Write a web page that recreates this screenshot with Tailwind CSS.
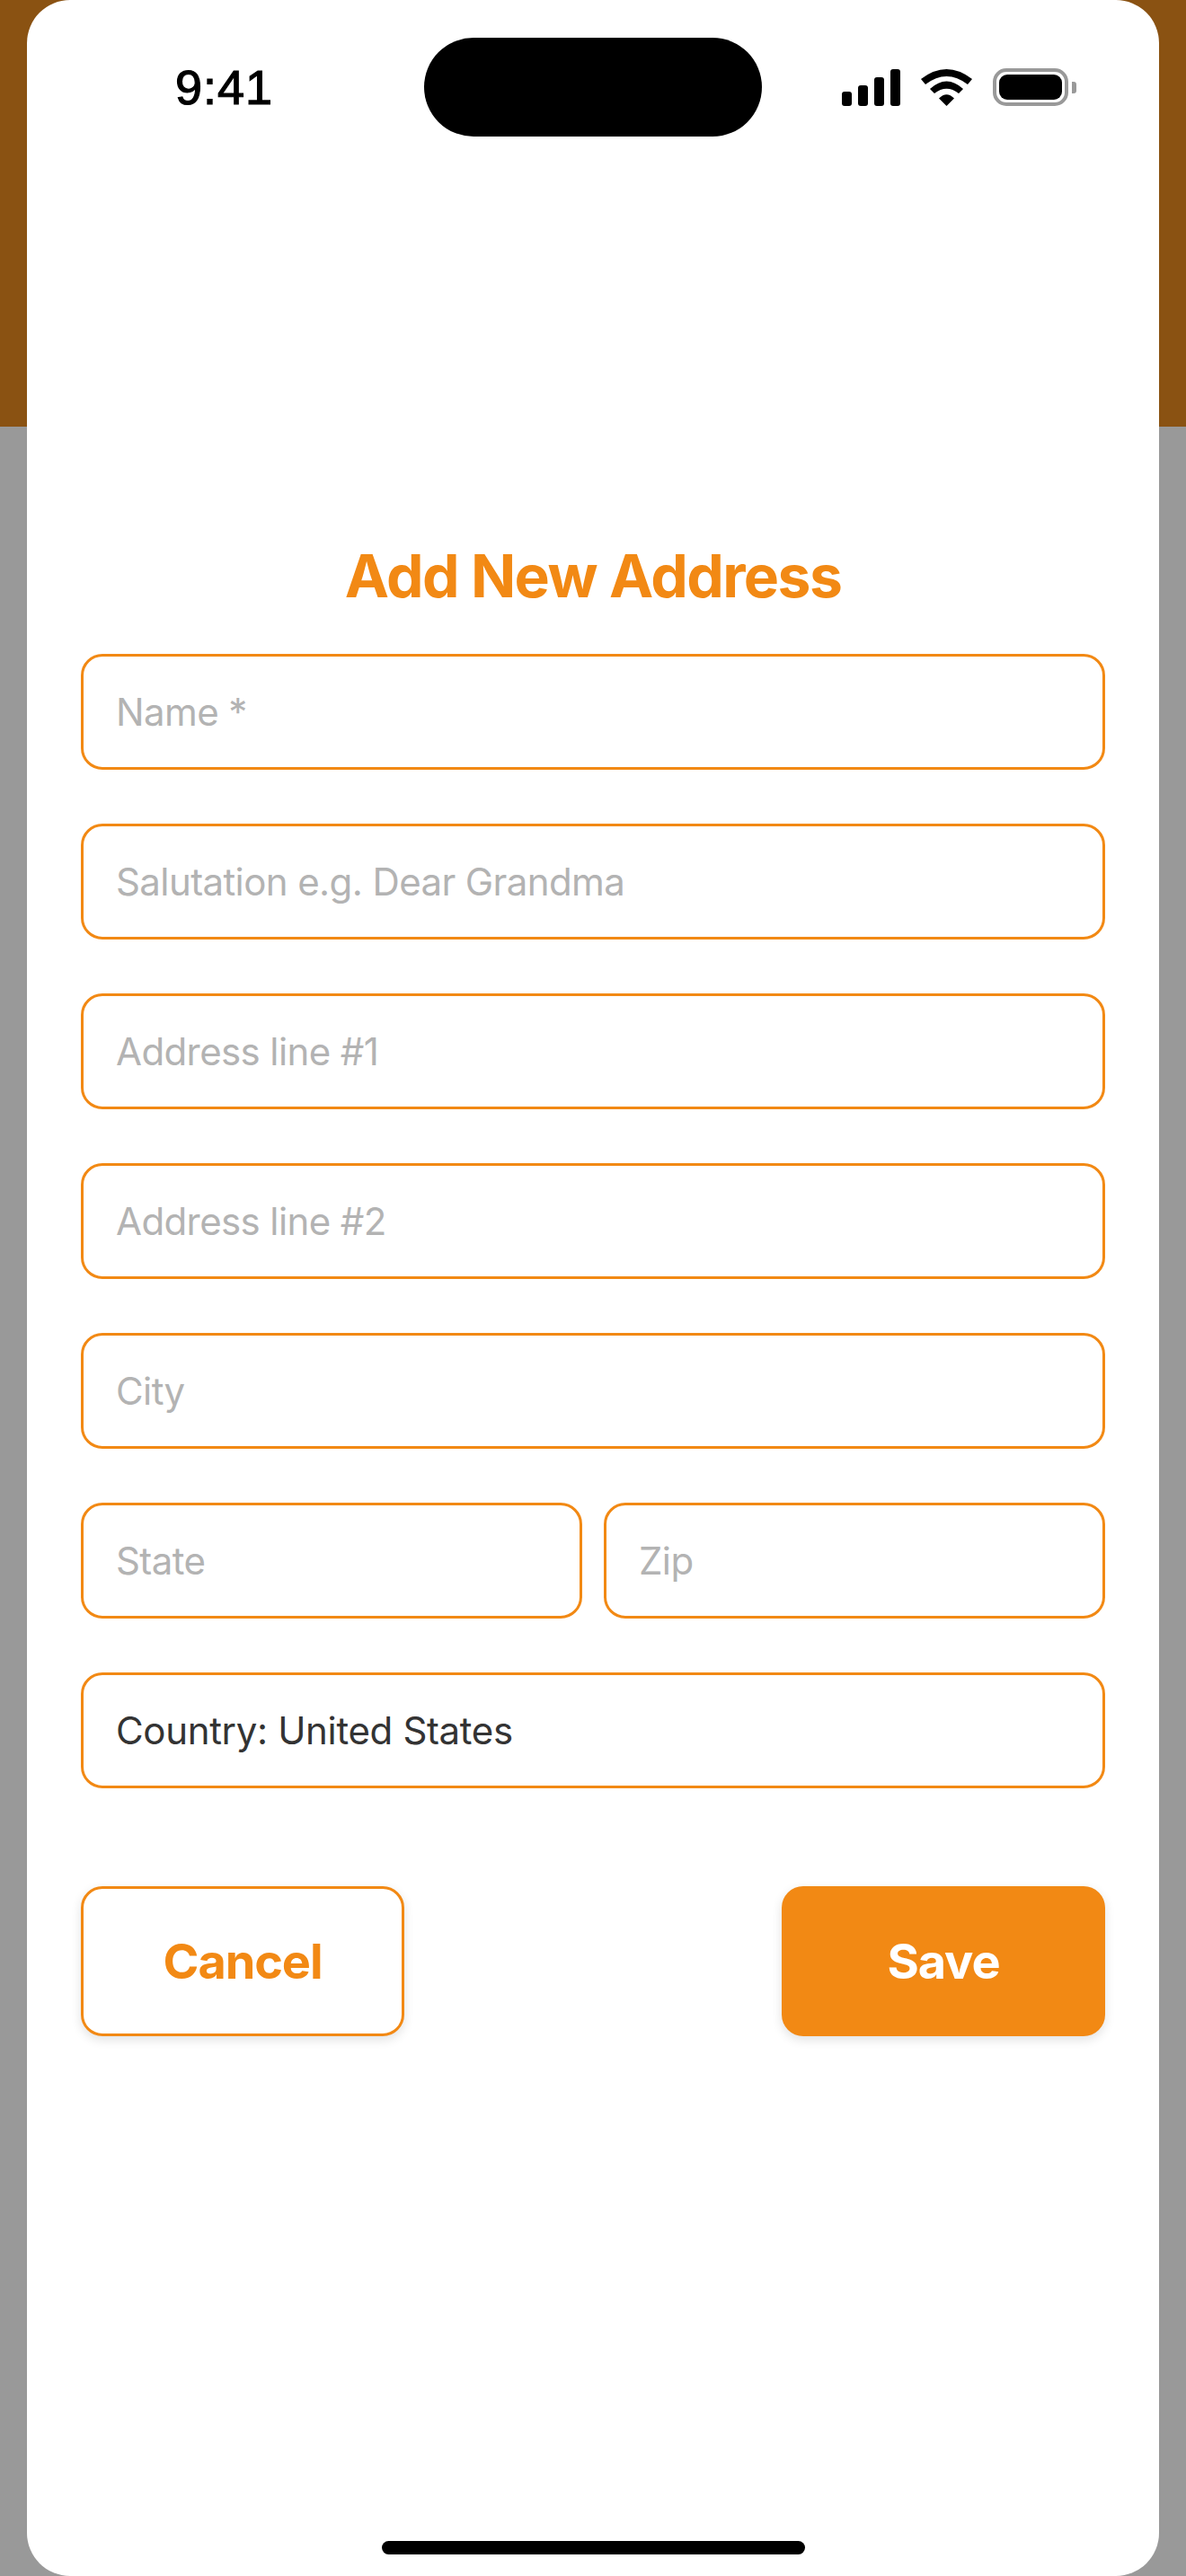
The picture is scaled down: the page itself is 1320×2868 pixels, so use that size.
<!DOCTYPE html>
<html lang="en">
<head>
    <meta charset="UTF-8">
    <title>Add New Address</title>
    <script src="https://cdn.jsdelivr.net/npm/@tailwindcss/browser@4"></script>
</head>
<body class="font-['Inter',sans-serif]">

<div class="h-[2868px] px-[30px] overflow-hidden bg-[linear-gradient(#8a5212_475px,#999999_475px)]">
    <div class="h-full bg-white rounded-[48px] flex flex-col">

        <!-- Status bar -->
        <div class="flex items-center pt-[42px]">
            <div class="w-[442px] pl-[165px] font-['Liberation_Sans',sans-serif] text-[54px] tracking-[1px] leading-[110px] text-black [-webkit-text-stroke:1.2px_black]">9:41</div>
            <div class="w-[376px] h-[110px] rounded-full bg-black"></div>
            <div class="pl-[89px] flex items-end">
                <div class="flex items-end gap-[7px]">
                    <div class="w-[11px] h-[16px] rounded-[3px] bg-black"></div>
                    <div class="w-[11px] h-[23px] rounded-[3px] bg-black"></div>
                    <div class="w-[11px] h-[32px] rounded-[3px] bg-black"></div>
                    <div class="w-[11px] h-[41px] rounded-[3px] bg-black"></div>
                </div>
                <svg class="ml-[23px]" width="57" height="41" viewBox="0 0 57 41" fill="#000">
                    <path d="M0 11Q28.5 -11 57 11L52 17Q28.5 -1 5 17Z"/>
                    <path d="M10 22Q28.5 5 47 22L42 27Q28.5 16.4 15 27Z"/>
                    <path d="M20 32.5Q28.5 24 37 32.5L28.5 41Z"/>
                </svg>
                <div class="ml-[23px] flex items-center">
                    <div class="w-[84px] h-[42px] p-[3px] rounded-[15px] border-[4px] border-[#999999] bg-white">
                        <div class="w-full h-full rounded-[9px] bg-black"></div>
                    </div>
                    <div class="ml-[4px] w-[5px] h-[13px] rounded-r-[3px] bg-[#999999]"></div>
                </div>
            </div>
        </div>

        <!-- Form -->
        <div class="px-[60px] pt-[449px] flex flex-col">
            <h1 class="text-center text-[66px] tracking-[-1.6px] leading-[80px] font-bold text-[#f28914]">Add New Address</h1>

            <div class="mt-[47px] flex flex-col gap-[60px] text-[42px] tracking-[-0.6px] text-[#b3b3b3]">
                <div class="h-[129px] px-[36px] flex items-center rounded-[24px] border-[3px] border-[#f28914]">Name *</div>
                <div class="h-[129px] px-[36px] flex items-center rounded-[24px] border-[3px] border-[#f28914]">Salutation e.g. Dear Grandma</div>
                <div class="h-[129px] px-[36px] flex items-center rounded-[24px] border-[3px] border-[#f28914]">Address line #1</div>
                <div class="h-[129px] px-[36px] flex items-center rounded-[24px] border-[3px] border-[#f28914]">Address line #2</div>
                <div class="h-[129px] px-[36px] flex items-center rounded-[24px] border-[3px] border-[#f28914]">City</div>
                <div class="flex gap-[24px]">
                    <div class="flex-1 h-[129px] px-[36px] flex items-center rounded-[24px] border-[3px] border-[#f28914]">State</div>
                    <div class="flex-1 h-[129px] px-[36px] flex items-center rounded-[24px] border-[3px] border-[#f28914]">Zip</div>
                </div>
                <div class="h-[129px] px-[36px] flex items-center rounded-[24px] border-[3px] border-[#f28914] tracking-[-0.34px] text-[#333333]">Country: United States</div>
            </div>

            <!-- Buttons -->
            <div class="mt-[109px] flex justify-between text-[54px] tracking-[-1.1px] font-bold">
                <div class="w-[360px] h-[167px] flex items-center justify-center rounded-[24px] border-[3px] border-[#f28914] bg-white text-[#f28914] shadow-[0_4px_12px_rgba(0,0,0,0.12)]">Cancel</div>
                <div class="w-[360px] h-[167px] flex items-center justify-center rounded-[24px] bg-[#f28914] text-white shadow-[0_4px_12px_rgba(0,0,0,0.12)]">Save</div>
            </div>
        </div>

        <!-- Home indicator -->
        <div class="mt-auto mb-[24px] mx-auto w-[471px] h-[15px] rounded-full bg-black"></div>
    </div>
</div>

</body>
</html>
